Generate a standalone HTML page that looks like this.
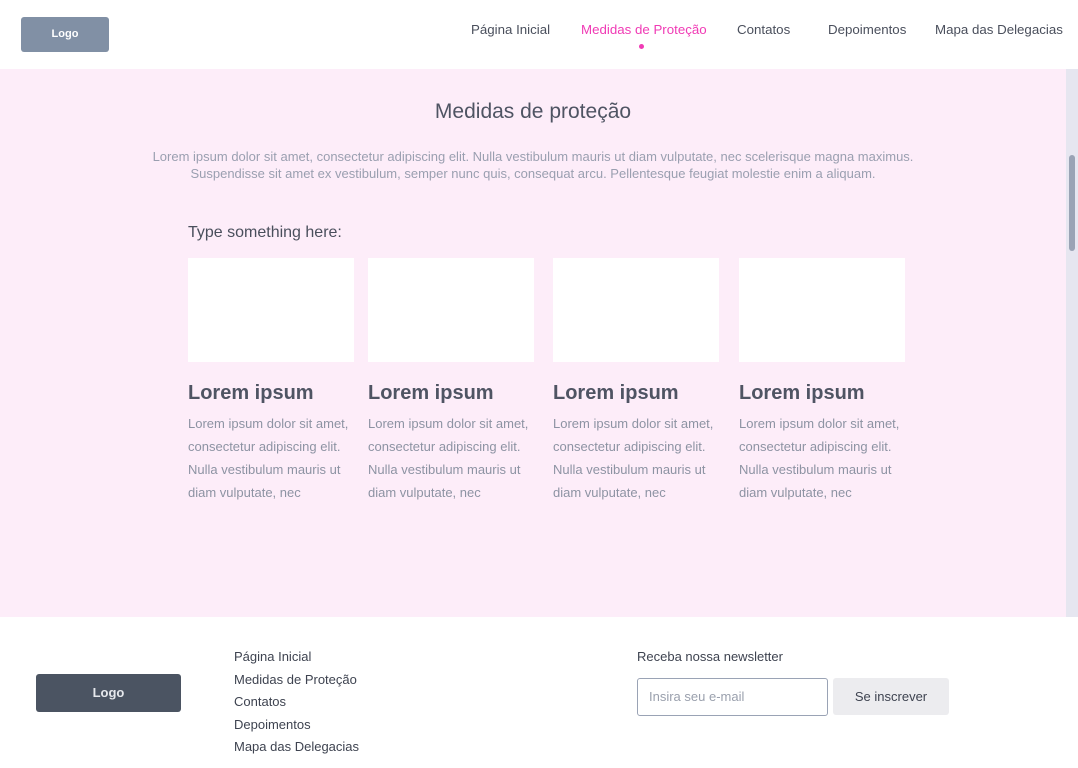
<!DOCTYPE html>
<html><head><meta charset="utf-8"><style>
*{margin:0;padding:0;box-sizing:border-box}
body{width:1078px;height:768px;overflow:hidden;background:#fff;font-family:"Liberation Sans",sans-serif;position:relative;color:#4a4f5c}
.a{position:absolute}
.nav{font-size:13.3px;color:#4a4f5c;top:22px}
.card{position:absolute;top:258px;width:166px}
.card .img{height:104px;background:#fff}
.card h3{font-size:20px;font-weight:bold;color:#4f5463;margin-top:20px}
.card p{font-size:13px;line-height:23px;color:#8d93a3;margin-top:7px}
.fl{font-size:13px;color:#3e4350;line-height:22.5px}
</style></head><body>
<div class="a" style="left:21px;top:17px;width:88px;height:35px;background:#8190a5;border-radius:3px;color:#fff;font-size:11px;font-weight:bold;text-align:center;line-height:35px">Logo</div>
<div class="a nav" style="left:471px">Página Inicial</div>
<div class="a nav" style="left:581px;color:#f03bb5">Medidas de Proteção</div>
<div class="a" style="left:639px;top:44px;width:5px;height:5px;border-radius:50%;background:#f03bb5"></div>
<div class="a nav" style="left:737px">Contatos</div>
<div class="a nav" style="left:828px">Depoimentos</div>
<div class="a nav" style="left:935px">Mapa das Delegacias</div>
<div class="a" style="left:0;top:69px;width:1066px;height:548px;background:#fdedf9"></div>
<div class="a" style="left:1066px;top:69px;width:12px;height:548px;background:#e6e6f0"></div>
<div class="a" style="left:1069px;top:155px;width:6px;height:96px;background:#9aa3b5;border-radius:3px"></div>
<div class="a" style="left:0;width:1066px;top:100px;text-align:center;font-size:21px;color:#4f5463">Medidas de proteção</div>
<div class="a" style="left:0;width:1066px;top:148px;text-align:center;font-size:13px;line-height:17px;color:#9a9fb0">Lorem ipsum dolor sit amet, consectetur adipiscing elit. Nulla vestibulum mauris ut diam vulputate, nec scelerisque magna maximus.<br>Suspendisse sit amet ex vestibulum, semper nunc quis, consequat arcu. Pellentesque feugiat molestie enim a aliquam.</div>
<div class="a" style="left:188px;top:224px;font-size:16px;color:#4a4f5c">Type something here:</div>
<div class="card" style="left:188px"><div class="img"></div><h3>Lorem ipsum</h3><p>Lorem ipsum dolor sit amet, consectetur adipiscing elit. Nulla vestibulum mauris ut diam vulputate, nec</p></div>
<div class="card" style="left:368px"><div class="img"></div><h3>Lorem ipsum</h3><p>Lorem ipsum dolor sit amet, consectetur adipiscing elit. Nulla vestibulum mauris ut diam vulputate, nec</p></div>
<div class="card" style="left:553px"><div class="img"></div><h3>Lorem ipsum</h3><p>Lorem ipsum dolor sit amet, consectetur adipiscing elit. Nulla vestibulum mauris ut diam vulputate, nec</p></div>
<div class="card" style="left:739px"><div class="img"></div><h3>Lorem ipsum</h3><p>Lorem ipsum dolor sit amet, consectetur adipiscing elit. Nulla vestibulum mauris ut diam vulputate, nec</p></div>
<div class="a" style="left:36px;top:674px;width:145px;height:38px;background:#4b5462;border-radius:3px;color:#e6e8ec;font-size:13px;font-weight:bold;text-align:center;line-height:38px">Logo</div>
<div class="a fl" style="left:234px;top:646px">Página Inicial<br>Medidas de Proteção<br>Contatos<br>Depoimentos<br>Mapa das Delegacias</div>
<div class="a" style="left:637px;top:649px;font-size:13px;color:#3e4350">Receba nossa newsletter</div>
<div class="a" style="left:637px;top:678px;width:191px;height:38px;border:1px solid #9aa3b5;border-radius:3px;font-size:13px;color:#9aa0ad;padding-left:11px;line-height:36px">Insira seu e-mail</div>
<div class="a" style="left:833px;top:678px;width:116px;height:37px;background:#ececef;border-radius:3px;font-size:13px;color:#3e4350;text-align:center;line-height:37px">Se inscrever</div>
</body></html>
